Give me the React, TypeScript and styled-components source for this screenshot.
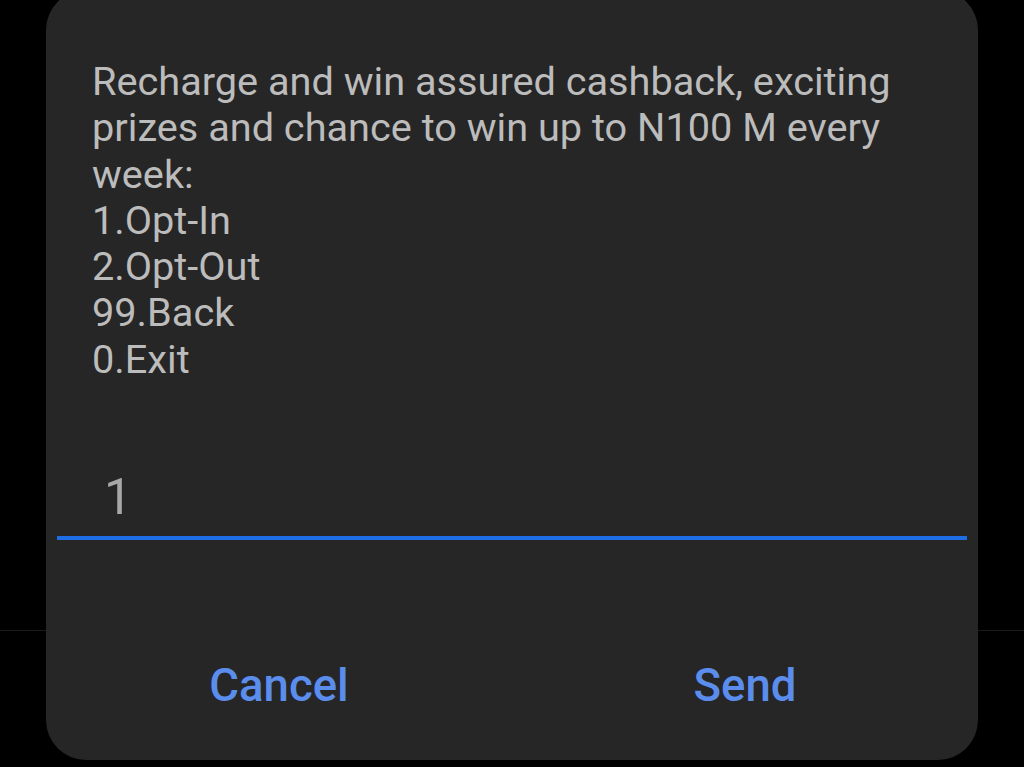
import React, { useState } from "react";
import styled, { createGlobalStyle } from "styled-components";

const GlobalStyle = createGlobalStyle`
  html, body {
    margin: 0;
    padding: 0;
    background: #000;
    overflow: hidden;
  }
  body {
    font-family: Roboto, "Noto Sans", "Liberation Sans", sans-serif;
  }
`;

const Screen = styled.div`
  width: 1024px;
  height: 767px;
  overflow: hidden;
  background:
    linear-gradient(#1b1b1b, #1b1b1b) 0 630px / 100% 1px no-repeat,
    #000;
  display: flex;
  justify-content: center;
`;

const Dialog = styled.div`
  width: 932px;
  height: 770px;
  margin-top: -10px;
  background: #262626;
  border-radius: 40px;
  display: flex;
  flex-direction: column;
`;

const Message = styled.div`
  padding: 69px 46px 0 46px;
  font-size: 39.7px;
  line-height: 46.3px;
  color: #bcbcbc;
  white-space: pre-line;
  height: 405px;
`;

const InputWrap = styled.div`
  margin: 0 11px;
  border-bottom: 4px solid #1e6fe6;
  padding: 3px 0 9px 47px;
`;

const Input = styled.input`
  background: transparent;
  border: none;
  outline: none;
  color: #a8a8a8;
  font-family: inherit;
  font-size: 50px;
  width: 100%;
  padding: 0;
  height: 60px;
`;

const Actions = styled.div`
  display: grid;
  grid-template-columns: 1fr 1fr;
  margin-top: 110px;
`;

const ActionButton = styled.button`
  background: none;
  border: none;
  color: #5b8ded;
  font-family: inherit;
  font-size: 45.5px;
  font-weight: 500;
  padding: 0;
  height: 70px;
  cursor: pointer;
`;

const menu = `Recharge and win assured cashback, exciting
prizes and chance to win up to N100 M every
week:
1.Opt-In
2.Opt-Out
99.Back
0.Exit`;

const App = () => {
  const [value, setValue] = useState("1");

  return (
    <>
      <GlobalStyle />
      <Screen>
        <Dialog>
          <Message>{menu}</Message>
          <InputWrap>
            <Input value={value} onChange={(e) => setValue(e.target.value)} />
          </InputWrap>
          <Actions>
            <ActionButton>Cancel</ActionButton>
            <ActionButton>Send</ActionButton>
          </Actions>
        </Dialog>
      </Screen>
    </>
  );
};

export default App;
